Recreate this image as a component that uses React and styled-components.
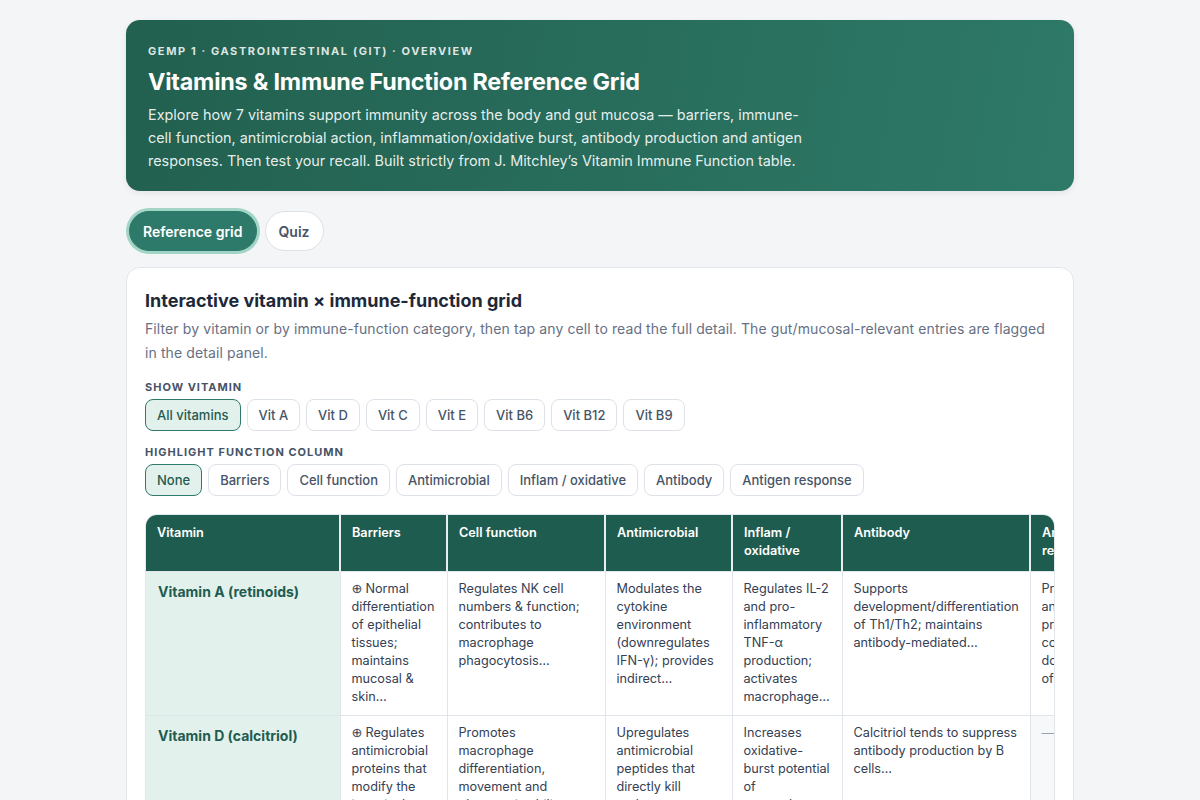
import React, { useState } from 'react'
import styled, { createGlobalStyle } from 'styled-components'

const GlobalStyle = createGlobalStyle`
  * { box-sizing: border-box; }
  body {
    margin: 0;
    background: #f4f5f7;
    font-family: Inter, "Noto Sans", "Liberation Sans", sans-serif;
    color: #1d2939;
  }
`

const VITAMINS = ['All vitamins', 'Vit A', 'Vit D', 'Vit C', 'Vit E', 'Vit B6', 'Vit B12', 'Vit B9']
const FUNCTIONS = ['None', 'Barriers', 'Cell function', 'Antimicrobial', 'Inflam / oxidative', 'Antibody', 'Antigen response']

const COLUMNS = [
  { key: 'name', label: 'Vitamin', width: 194 },
  { key: 'barriers', label: 'Barriers', width: 107 },
  { key: 'cell', label: 'Cell function', width: 158 },
  { key: 'antimicrobial', label: 'Antimicrobial', width: 127 },
  { key: 'inflam', label: 'Inflam / oxidative', width: 110 },
  { key: 'antibody', label: 'Antibody', width: 188 },
  { key: 'antigen', label: 'Antigen response', width: 112 },
]

// gut: true marks the entries that are flagged as gut/mucosal-relevant
const ROWS = [
  {
    name: 'Vitamin A (retinoids)',
    barriers: { text: 'Normal differentiation of epithelial tissues; maintains mucosal & skin…', gut: true },
    cell: { text: 'Regulates NK cell numbers & function; contributes to macrophage phagocytosis…' },
    antimicrobial: { text: 'Modulates the cytokine environment (downregulates IFN-γ); provides indirect…' },
    inflam: { text: 'Regulates IL-2 and pro-inflammatory TNF-α production; activates macrophage…' },
    antibody: { text: 'Supports development/differentiation of Th1/Th2; maintains antibody-mediated…' },
    antigen: { text: 'Promotes antigen presentation; contributes to downregulation of Th1…' },
  },
  {
    name: 'Vitamin D (calcitriol)',
    barriers: { text: 'Regulates antimicrobial proteins that modify the intestinal microflora…', gut: true },
    cell: { text: 'Promotes macrophage differentiation, movement and phagocytic ability…' },
    antimicrobial: { text: 'Upregulates antimicrobial peptides that directly kill pathogens…' },
    inflam: { text: 'Increases oxidative-burst potential of macrophages…' },
    antibody: { text: 'Calcitriol tends to suppress antibody production by B cells…' },
    antigen: null,
  },
  {
    name: 'Vitamin C (ascorbic acid)',
    barriers: { text: 'Promotes collagen synthesis; protects cell membranes…', gut: true },
    cell: { text: 'Supports neutrophil chemotaxis and phagocytosis…' },
    antimicrobial: { text: 'Enhances microbial killing by phagocytes…' },
    inflam: { text: 'Antioxidant; regenerates vitamin E…' },
    antibody: { text: 'Increases serum levels of antibodies…' },
    antigen: null,
  },
]

export default function App() {
  const [tab, setTab] = useState('grid')
  const [vitamin, setVitamin] = useState('All vitamins')
  const [highlight, setHighlight] = useState('None')

  return (
    <>
      <GlobalStyle />
      <Page>
        <Hero>
          <Eyebrow>GEMP 1 · Gastrointestinal (GIT) · Overview</Eyebrow>
          <HeroTitle>Vitamins &amp; Immune Function Reference Grid</HeroTitle>
          <HeroText>
            Explore how 7 vitamins support immunity across the body and gut mucosa — barriers, immune-cell
            function, antimicrobial action, inflammation/oxidative burst, antibody production and antigen
            responses. Then test your recall. Built strictly from J. Mitchley’s Vitamin Immune Function table.
          </HeroText>
        </Hero>

        <Tabs>
          <Tab $active={tab === 'grid'} onClick={() => setTab('grid')}>Reference grid</Tab>
          <Tab $active={tab === 'quiz'} onClick={() => setTab('quiz')}>Quiz</Tab>
        </Tabs>

        <Card>
          <CardTitle>Interactive vitamin × immune-function grid</CardTitle>
          <CardText>
            Filter by vitamin or by immune-function category, then tap any cell to read the full detail. The
            gut/mucosal-relevant entries are flagged in the detail panel.
          </CardText>

          <FilterLabel>Show vitamin</FilterLabel>
          <ChipRow>
            {VITAMINS.map((v) => (
              <Chip key={v} $active={vitamin === v} onClick={() => setVitamin(v)}>{v}</Chip>
            ))}
          </ChipRow>

          <FilterLabel>Highlight function column</FilterLabel>
          <ChipRow>
            {FUNCTIONS.map((f) => (
              <Chip key={f} $active={highlight === f} onClick={() => setHighlight(f)}>{f}</Chip>
            ))}
          </ChipRow>

          <TableScroll>
            <Grid>
              <colgroup>
                {COLUMNS.map((c) => (
                  <col key={c.key} style={{ width: c.width }} />
                ))}
              </colgroup>
              <thead>
                <tr>
                  {COLUMNS.map((c) => (
                    <HeadCell key={c.key}>{c.label}</HeadCell>
                  ))}
                </tr>
              </thead>
              <tbody>
                {ROWS.map((row) => (
                  <tr key={row.name}>
                    <NameCell>{row.name}</NameCell>
                    {COLUMNS.slice(1).map((c) => {
                      const entry = row[c.key]
                      if (!entry) return <Cell key={c.key} $empty>—</Cell>
                      return (
                        <Cell key={c.key}>
                          {entry.gut && <GutFlag>⊕</GutFlag>}
                          {entry.text}
                        </Cell>
                      )
                    })}
                  </tr>
                ))}
              </tbody>
            </Grid>
          </TableScroll>
        </Card>
      </Page>
    </>
  )
}

const Page = styled.div`
  width: 948px;
  margin: 20px auto 40px;
`

const Hero = styled.header`
  background: linear-gradient(100deg, #22604f 0%, #2e7968 100%);
  border-radius: 14px;
  padding: 23px 22px 19px;
  color: #fff;
  box-shadow: 0 2px 6px rgba(16, 24, 40, 0.08);
`

const Eyebrow = styled.div`
  font-size: 11px;
  font-weight: 700;
  letter-spacing: 1.6px;
  text-transform: uppercase;
  color: rgba(255, 255, 255, 0.85);
  line-height: 16px;
`

const HeroTitle = styled.h1`
  margin: 7px 0 5px;
  font-size: 23.3px;
  line-height: 32px;
  font-weight: 700;
  letter-spacing: -0.2px;
`

const HeroText = styled.p`
  margin: 0;
  max-width: 665px;
  font-size: 14.4px;
  line-height: 23px;
  color: rgba(255, 255, 255, 0.9);
`

const Tabs = styled.div`
  display: flex;
  gap: 8px;
  padding: 20px 0 16px 3px;
`

const Tab = styled.button`
  height: 40px;
  padding: 0 13px;
  border-radius: 20px;
  font-family: inherit;
  font-size: 14px;
  font-weight: 600;
  cursor: pointer;
  border: 1px solid ${(p) => (p.$active ? '#2d7a6a' : '#dde2e8')};
  background: ${(p) => (p.$active ? '#2d7a6a' : '#fff')};
  color: ${(p) => (p.$active ? '#fff' : '#475467')};
  box-shadow: ${(p) => (p.$active ? '0 0 0 3px #a3d5c7' : 'none')};
`

const Card = styled.section`
  background: #fff;
  border: 1px solid #e2e6ea;
  border-radius: 14px;
  padding: 20px 18px 24px;
`

const CardTitle = styled.h2`
  margin: 0;
  font-size: 18px;
  line-height: 26px;
  font-weight: 700;
  color: #1d2939;
`

const CardText = styled.p`
  margin: 3px 0 14px;
  font-size: 14px;
  line-height: 24px;
  letter-spacing: 0.1px;
  color: #667085;
`

const FilterLabel = styled.div`
  margin: 13px 0 4px;
  font-size: 11px;
  line-height: 16px;
  font-weight: 700;
  letter-spacing: 1px;
  text-transform: uppercase;
  color: #475467;
`

const ChipRow = styled.div`
  display: flex;
  flex-wrap: wrap;
  gap: 6px;
`

const Chip = styled.button`
  height: 32px;
  padding: 0 11px;
  border-radius: 8px;
  font-family: inherit;
  font-size: 13px;
  font-weight: 500;
  cursor: pointer;
  border: 1px solid ${(p) => (p.$active ? '#2d7a6a' : '#dde2e8')};
  background: ${(p) => (p.$active ? '#e3f1ed' : '#fff')};
  color: ${(p) => (p.$active ? '#1f5c50' : '#475467')};
`

const TableScroll = styled.div`
  margin-top: 18px;
  border: 1px solid #e1e6eb;
  border-radius: 12px;
  overflow-x: auto;
  overflow-y: hidden;
  &::-webkit-scrollbar { height: 0; }
`

const Grid = styled.table`
  border-collapse: collapse;
  table-layout: fixed;
  width: 996px;
  font-size: 12.7px;
  line-height: 18px;
`

const HeadCell = styled.th`
  background: #1f5c50;
  color: #fff;
  font-weight: 600;
  text-align: left;
  vertical-align: top;
  padding: 9px 11px 10px;
  height: 56px;
  border-right: 2px solid #e8eef0;
  &:last-child { border-right: none; }
`

const Cell = styled.td`
  vertical-align: top;
  padding: 8px 11px 9px;
  color: ${(p) => (p.$empty ? '#98a2b3' : '#344054')};
  background: ${(p) => (p.$empty ? '#f6f8f9' : '#fff')};
  border-top: 1px solid #dfe5ea;
  border-left: 1px solid #dfe5ea;
`

const GutFlag = styled.span`
  font-family: "DejaVu Sans", sans-serif;
  font-size: 13px;
  margin-right: 3px;
`

const NameCell = styled.td`
  vertical-align: top;
  padding: 11px 12px;
  background: #e3f1ed;
  color: #1f5c50;
  font-size: 14px;
  font-weight: 700;
  border-top: 1px solid #dfe5ea;
`
